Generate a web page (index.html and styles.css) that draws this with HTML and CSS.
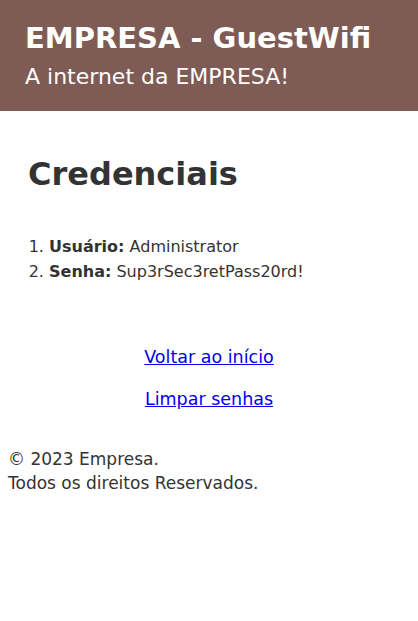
FILE: index.html
```html
<!DOCTYPE html>
<html lang="pt">
<head>
<meta charset="utf-8">
<title>EMPRESA - GuestWifi</title>
<link rel="stylesheet" href="styles.css">
</head>
<body>
<header class="topbar">
  <h1 class="brand">EMPRESA - GuestWifi</h1>
  <p class="tagline">A internet da EMPRESA!</p>
</header>
<main class="content">
  <h2 class="heading">Credenciais</h2>
  <ol class="creds">
    <li><b>Usuário:</b> Administrator</li>
    <li><b>Senha:</b> Sup3rSec3retPass20rd!</li>
  </ol>
  <nav class="actions">
    <a href="#">Voltar ao início</a>
    <a href="#">Limpar senhas</a>
  </nav>
</main>
<footer class="foot">
  <p>© 2023 Empresa.<br>Todos os direitos Reservados.</p>
</footer>
</body>
</html>
```
FILE: styles.css
```css
html, body {
  margin: 0;
  padding: 0;
  background: #fff;
}
body {
  font-family: "Century Gothic", "DejaVu Sans", sans-serif;
  color: #333;
}
.topbar {
  background: #7f5b56;
  color: #fff;
  padding: 18px 25px 15px;
}
.brand {
  margin: 0;
  font-size: 29px;
  line-height: 40px;
  font-weight: bold;
  white-space: nowrap;
}
.tagline {
  margin: 0;
  font-size: 22px;
  line-height: 38px;
}
.content {
  padding: 41px 28px 0;
}
.heading {
  margin: 0;
  font-size: 32px;
  line-height: 44px;
  font-weight: bold;
  color: #333;
}
.creds {
  margin: 38px 0 0;
  padding-left: 21px;
  font-size: 16px;
  line-height: 25px;
}
.actions {
  display: flex;
  flex-direction: column;
  align-items: center;
  gap: 16px;
  margin-top: 60px;
  font-size: 17.5px;
  line-height: 26px;
}
.actions a {
  color: #0000ee;
}
.foot {
  padding: 35px 8px 0;
  font-size: 17px;
  line-height: 24px;
}
.foot p {
  margin: 0;
}
```
